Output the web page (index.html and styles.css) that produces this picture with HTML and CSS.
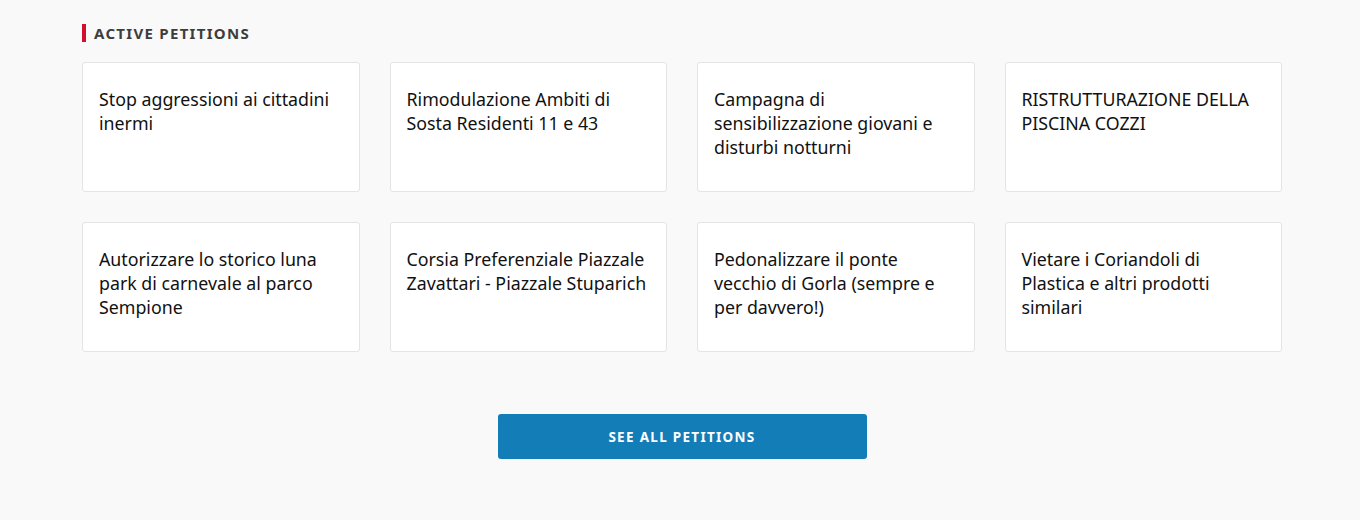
FILE: index.html
```html
<!DOCTYPE html>
<html>
<head>
<meta charset="utf-8">
<link rel="stylesheet" href="styles.css">
</head>
<body>
<section class="petitions">
  <h2 class="section-title">ACTIVE PETITIONS</h2>
  <div class="grid">
    <a class="card">Stop aggressioni ai cittadini inermi</a>
    <a class="card">Rimodulazione Ambiti di Sosta Residenti 11 e 43</a>
    <a class="card">Campagna di sensibilizzazione giovani e disturbi notturni</a>
    <a class="card">RISTRUTTURAZIONE DELLA PISCINA COZZI</a>
    <a class="card">Autorizzare lo storico luna park di carnevale al parco Sempione</a>
    <a class="card">Corsia Preferenziale Piazzale Zavattari - Piazzale Stuparich</a>
    <a class="card">Pedonalizzare il ponte vecchio di Gorla (sempre e per davvero!)</a>
    <a class="card">Vietare i Coriandoli di Plastica e altri prodotti similari</a>
  </div>
  <div class="actions">
    <a class="btn">SEE ALL PETITIONS</a>
  </div>
</section>
</body>
</html>
```
FILE: styles.css
```css
html, body {
  margin: 0;
  padding: 0;
  background: #f9f9f9;
  font-family: "Noto Sans", "Liberation Sans", sans-serif;
  color: #111;
}
body {
  padding-left: 4px;
}
.petitions {
  width: 1200px;
  margin: 0 auto;
  padding-top: 24px;
}
.section-title {
  margin: 0 0 20px 0;
  font-size: 15px;
  line-height: 18px;
  font-weight: 700;
  letter-spacing: 1.3px;
  color: #3d3d3d;
  border-left: 4px solid #d0102e;
  padding-left: 8px;
}
.grid {
  display: grid;
  grid-template-columns: repeat(4, 1fr);
  column-gap: 30px;
  row-gap: 30px;
}
.card {
  display: block;
  box-sizing: border-box;
  height: 130px;
  background: #fff;
  border: 1px solid #e4e4e4;
  border-radius: 3px;
  padding: 24px 16px;
  font-size: 17.8px;
  line-height: 24px;
  color: #111;
}
.actions {
  display: flex;
  justify-content: center;
  margin-top: 62px;
}
.btn {
  display: flex;
  align-items: center;
  justify-content: center;
  width: 369px;
  height: 45px;
  background: #137db8;
  border-radius: 3px;
  color: #fff;
  font-size: 13.5px;
  font-weight: 700;
  letter-spacing: 1.3px;
}
```
